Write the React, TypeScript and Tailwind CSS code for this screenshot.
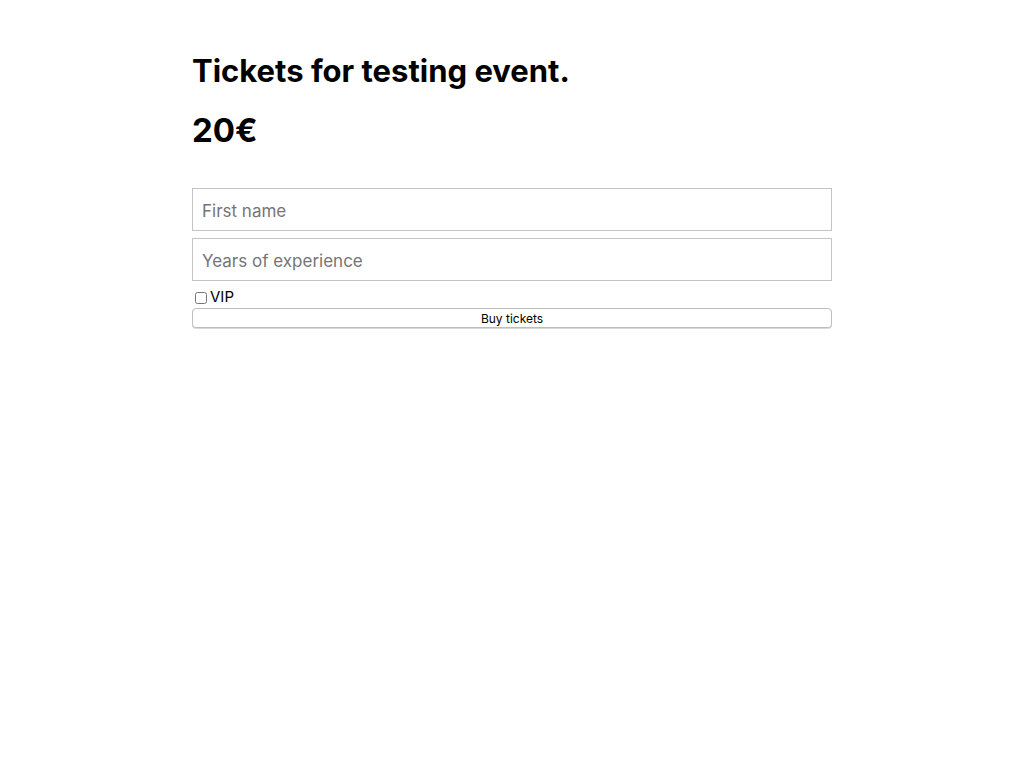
import React from 'react'

const App: React.FC = () => {
  return (
    <div className="min-h-screen bg-white font-['Inter',sans-serif] text-black">
      <div className="mx-auto w-[640px] pt-[52px]">
        <h1 className="text-[31px] leading-[38px] font-bold">Tickets for testing event.</h1>
        <h2 className="mt-[21px] text-[33px] leading-[38px] font-bold">20€</h2>

        <form className="mt-[39px] flex flex-col" onSubmit={(e) => e.preventDefault()}>
          <input
            type="text"
            placeholder="First name"
            className="h-[43px] w-full border border-[#c4c4c4] px-[9px] pt-[3px] text-[17px] outline-none placeholder:text-[#757575]"
          />
          <input
            type="number"
            placeholder="Years of experience"
            className="mt-[7px] h-[43px] w-full border border-[#c4c4c4] px-[9px] pt-[3px] text-[17px] outline-none placeholder:text-[#757575]"
          />
          <label className="mt-[6px] flex h-[21px] items-center text-[15px]">
            <input type="checkbox" className="ml-[3px] mr-[3px] h-[12px] w-[12px]" />
            VIP
          </label>
          <button
            type="submit"
            className="h-[20px] w-full rounded-[4px] border border-[#bdbdbd] bg-white pt-[1px] text-[12px] leading-none shadow-[0_1px_0_#d9d9d9]"
          >
            Buy tickets
          </button>
        </form>
      </div>
    </div>
  )
}

export default App
